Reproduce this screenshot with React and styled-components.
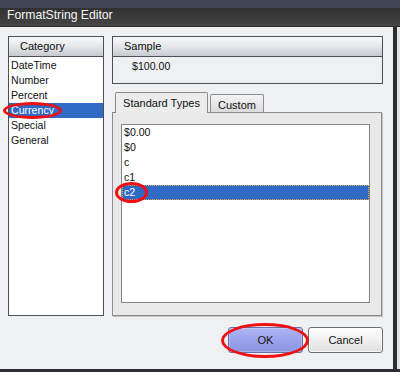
import React from 'react';
import styled, { createGlobalStyle } from 'styled-components';

const GlobalStyle = createGlobalStyle`
  html, body { margin: 0; padding: 0; background: #2c2e33; }
  * { box-sizing: border-box; }
`;

const Window = styled.div`
  width: 400px;
  height: 372px;
  display: flex;
  flex-direction: column;
  overflow: hidden;
  font-family: "Liberation Sans", Arial, sans-serif;
  font-size: 10.6px;
  color: #111;
`;

const TitleBar = styled.div`
  height: 27px;
  flex: none;
  display: flex;
  align-items: center;
  padding: 2px 0 0 7px;
  font-size: 12.2px;
  color: #f4f4f4;
  background: linear-gradient(to bottom,
    #3f4553 0, #3f4553 8px,
    #2f302f 8px, #464646 26px,
    #2a2a2a 26px);
`;

const Middle = styled.div`
  flex: 1;
  display: flex;
`;

const Dialog = styled.div`
  width: 393px;
  background: #eff0f2;
  padding: 9px 10px 0 8px;
  display: flex;
  flex-direction: column;
`;

const Edge = styled.div`
  width: 4px;
  background: #2c2e33;
`;

const Backdrop = styled.div`
  flex: 1;
  background: #e3e4e6;
`;

const BottomEdge = styled.div`
  height: 3px;
  flex: none;
  background: #2c2e33;
`;

const Content = styled.div`
  height: 280px;
  display: flex;
  gap: 8px;
`;

const GroupBox = styled.div`
  width: ${p => p.$width}px;
  border: 1px solid #4b5059;
  display: flex;
  flex-direction: column;
  background: #fff;
`;

const Header = styled.div`
  height: 20px;
  flex: none;
  border-bottom: 1px solid #4b5059;
  padding: 3px 0 0 ${p => p.$indent}px;
  font-size: 11px;
  background: linear-gradient(to bottom, #f7f8f9, #e4e6e9 50%, #c7cad0);
`;

const List = styled.div`
  flex: 1;
  padding-top: ${p => p.$top}px;
`;

const Item = styled.div`
  position: relative;
  height: 15px;
  line-height: 15px;
  padding-left: ${p => p.$indent}px;
  background: ${p => (p.$selected ? '#316ac5' : 'transparent')};
  color: ${p => (p.$selected ? '#fff' : '#111')};
  outline: ${p => (p.$focus ? '1px dotted #e0a24a' : 'none')};
  outline-offset: -1px;
`;

const Mark = styled.span`
  position: absolute;
  left: ${p => p.$l}px;
  top: ${p => p.$t}px;
  width: ${p => p.$w}px;
  height: ${p => p.$h}px;
  border: 3px solid #ee1111;
  border-radius: 50%;
  pointer-events: none;
  z-index: 3;
`;

const RightCol = styled.div`
  width: 271px;
  display: flex;
  flex-direction: column;
`;

const SampleBody = styled.div`
  height: 26px;
  padding: 2px 0 0 19px;
  line-height: 15px;
  background: #eff0f2;
`;

const TabStrip = styled.div`
  margin-top: 8px;
  height: 21px;
  display: flex;
  align-items: flex-end;
  gap: 2px;
  padding-left: 3px;
  margin-bottom: -1px;
  position: relative;
  z-index: 2;
`;

const Tab = styled.div`
  width: ${p => p.$width}px;
  height: ${p => (p.$active ? 21 : 18)}px;
  margin-bottom: ${p => (p.$active ? 0 : 1)}px;
  border: 1px solid #8c8c8c;
  border-bottom: none;
  border-radius: 2px 2px 0 0;
  display: flex;
  align-items: center;
  justify-content: center;
  font-size: 11px;
  padding-top: ${p => (p.$active ? 0 : 2)}px;
  background: ${p => (p.$active ? '#ececec' : 'linear-gradient(to bottom, #f4f4f4, #dcdcdc)')};
`;

const TabPanel = styled.div`
  height: 204px;
  width: 270px;
  border: 1px solid #8c8c8c;
  background: #e9e9e9;
  box-shadow: 1px 1px 0 #c4c4c4;
  padding: 11px 11px 12px 8px;
`;

const ListBox = styled.div`
  height: 179px;
  border: 1px solid #858585;
  background: #fff;
`;

const Footer = styled.div`
  margin-top: 11px;
  display: flex;
  justify-content: flex-end;
  gap: 5px;
`;

const Button = styled.div`
  position: relative;
  width: 75px;
  height: 26px;
  border-radius: 3px;
  display: flex;
  align-items: center;
  justify-content: center;
  font-size: 11px;
  border: 1px solid ${p => (p.$primary ? '#6a70a6' : '#707070')};
  background: ${p => (p.$primary
    ? 'linear-gradient(to bottom, #b0b6f4, #9aa2ea 50%, #8d96e2)'
    : 'linear-gradient(to bottom, #fdfdfd, #f0f0f0 50%, #dedede)')};
  box-shadow: inset 0 0 0 1px ${p => (p.$primary ? 'rgba(255,255,255,0.25)' : 'rgba(255,255,255,0.7)')};
`;

const categories = ['DateTime', 'Number', 'Percent', 'Currency', 'Special', 'General'];
const types = ['$0.00', '$0', 'c', 'c1', 'c2'];

export default function App() {
  return (
    <Window>
      <GlobalStyle />
      <TitleBar>FormatString Editor</TitleBar>
      <Middle>
        <Dialog>
          <Content>
            <GroupBox $width={96}>
              <Header $indent={11}>Category</Header>
              <List $top={1}>
                {categories.map(c => (
                  <Item key={c} $indent={2} $selected={c === 'Currency'}>
                    {c}
                    {c === 'Currency' && <Mark $l={-6} $t={-1} $w={59} $h={17} />}
                  </Item>
                ))}
              </List>
            </GroupBox>
            <RightCol>
              <GroupBox $width={271}>
                <Header $indent={11}>Sample</Header>
                <SampleBody>$100.00</SampleBody>
              </GroupBox>
              <TabStrip>
                <Tab $active $width={93}>Standard Types</Tab>
                <Tab $width={54}>Custom</Tab>
              </TabStrip>
              <TabPanel>
                <ListBox>
                  {types.map(t => (
                    <Item key={t} $indent={2} $selected={t === 'c2'} $focus={t === 'c2'}>
                      {t}
                      {t === 'c2' && <Mark $l={-7} $t={-3} $w={33} $h={21} />}
                    </Item>
                  ))}
                </ListBox>
              </TabPanel>
            </RightCol>
          </Content>
          <Footer>
            <Button $primary>
              OK
              <Mark $l={-8} $t={-5} $w={88} $h={35} />
            </Button>
            <Button>Cancel</Button>
          </Footer>
        </Dialog>
        <Edge />
        <Backdrop />
      </Middle>
      <BottomEdge />
    </Window>
  );
}
